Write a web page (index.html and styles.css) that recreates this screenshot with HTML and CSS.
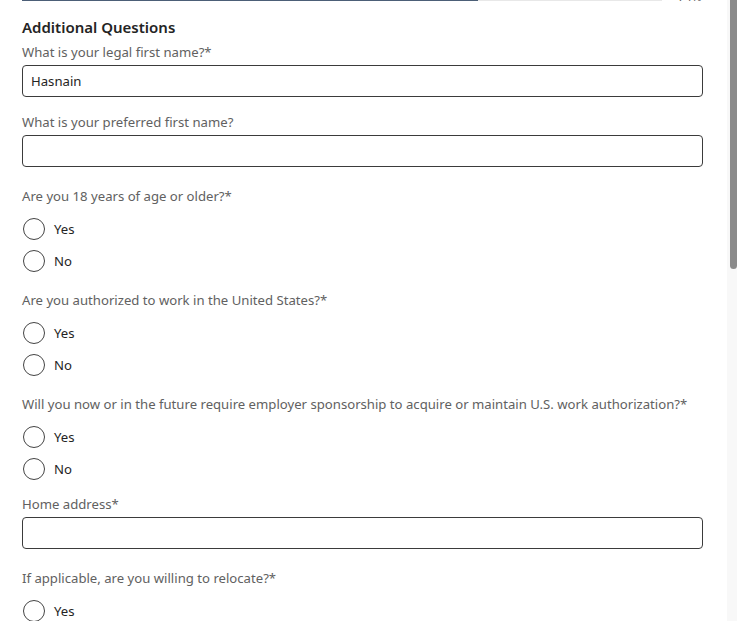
FILE: index.html
```
<!DOCTYPE html>
<html>
<head>
<meta charset="utf-8">
<link rel="stylesheet" href="styles.css">
</head>
<body>
<div class="page">
  <div class="progress">
    <div class="track"><div class="fill" style="width:71.25%"></div></div>
    <span class="pct">74%</span>
  </div>
  <h2 class="title">Additional Questions</h2>

  <div class="field first">
    <label class="label">What is your legal first name?*</label>
    <div class="input">Hasnain</div>
  </div>

  <div class="field">
    <label class="label">What is your preferred first name?</label>
    <div class="input"></div>
  </div>

  <div class="field choice">
    <div class="legend">Are you 18 years of age or older?*</div>
    <div class="radios">
      <div class="radio"><span class="circle"></span><span>Yes</span></div>
      <div class="radio"><span class="circle"></span><span>No</span></div>
    </div>
  </div>

  <div class="field choice">
    <div class="legend">Are you authorized to work in the United States?*</div>
    <div class="radios">
      <div class="radio"><span class="circle"></span><span>Yes</span></div>
      <div class="radio"><span class="circle"></span><span>No</span></div>
    </div>
  </div>

  <div class="field choice">
    <div class="legend">Will you now or in the future require employer sponsorship to acquire or maintain U.S. work authorization?*</div>
    <div class="radios">
      <div class="radio"><span class="circle"></span><span>Yes</span></div>
      <div class="radio"><span class="circle"></span><span>No</span></div>
    </div>
  </div>

  <div class="field">
    <label class="label">Home address*</label>
    <div class="input"></div>
  </div>

  <div class="field choice">
    <div class="legend">If applicable, are you willing to relocate?*</div>
    <div class="radios">
      <div class="radio"><span class="circle"></span><span>Yes</span></div>
      <div class="radio"><span class="circle"></span><span>No</span></div>
    </div>
  </div>
</div>
<div class="scrollbar"><div class="thumb"></div></div>
</body>
</html>
```
FILE: styles.css
```
html, body {
  margin: 0;
  padding: 0;
  height: 621px;
  overflow: hidden;
  background: #ffffff;
}
body {
  font-family: "Noto Sans", "Open Sans", sans-serif;
  font-size: 13.15px;
  color: #242424;
}
.page {
  width: 681px;
  padding-left: 22px;
  margin-top: -11px;
}
.progress {
  display: flex;
  align-items: flex-end;
  height: 12px;
}
.track {
  width: 640px;
  height: 2px;
  background: #e8e8e8;
}
.fill {
  height: 100%;
  background: #4c5f77;
}
.pct {
  margin-left: 16px;
  font-size: 12px;
  color: #616161;
  line-height: 12px;
  margin-bottom: -2px;
}
.title {
  margin: 16px 0 0;
  font-size: 15px;
  font-weight: 600;
  line-height: 20px;
  color: #242424;
}
.label,
.legend {
  display: block;
  color: #616161;
  line-height: 18px;
}
.legend {
  padding-top: 4px;
}
.field {
  margin-top: 16px;
}
.field.first {
  margin-top: 6px;
}
.field.choice + .field {
  margin-top: 15px;
}
.input {
  margin-top: 4px;
  height: 30px;
  border: 1px solid #3b3b3b;
  border-radius: 4px;
  padding: 0 8px;
  display: flex;
  align-items: center;
  color: #242424;
}
.radios {
  margin-top: 13px;
  display: flex;
  flex-direction: column;
  gap: 10px;
}
.radio {
  display: flex;
  align-items: center;
  gap: 9px;
  height: 22px;
  padding-left: 1px;
}
.circle {
  width: 20px;
  height: 20px;
  border: 1px solid #444;
  border-radius: 50%;
  flex: none;
}
.scrollbar {
  position: fixed;
  top: 0;
  right: 0;
  width: 10px;
  height: 621px;
  background: #f8f8f8;
}
.thumb {
  margin-left: 3px;
  width: 7px;
  height: 269px;
  background: #8b8b8b;
  border-radius: 0 0 4px 4px;
}
```
